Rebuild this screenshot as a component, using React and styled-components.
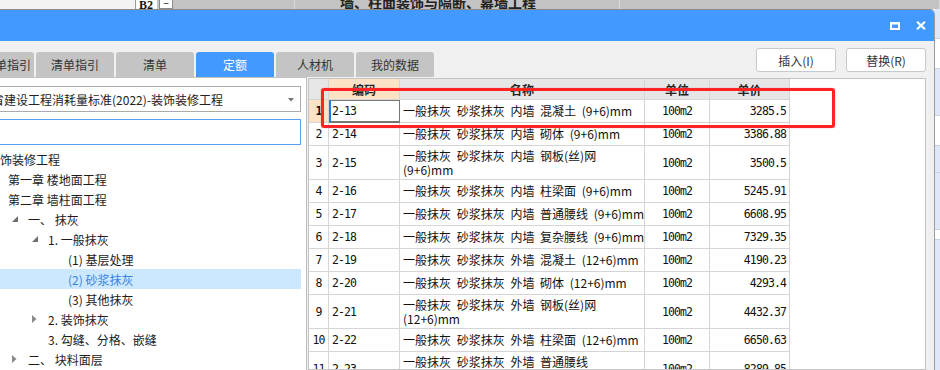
import React from "react";
import styled, { createGlobalStyle } from "styled-components";

const CJK = `"Noto Sans CJK SC", "Noto Sans", sans-serif`;
const MONO = `"DejaVu Sans Mono", "Liberation Mono", "Noto Sans CJK SC", monospace`;
const BLUE = "#4299ff";

const tabs = [
  { label: "清单指引", align: "flex-end" },
  { label: "清单指引" },
  { label: "清单" },
  { label: "定额", active: true },
  { label: "人材机" },
  { label: "我的数据" },
];

const tree = [
  { level: 0, text: "装饰装修工程" },
  { level: 1, text: "第一章 楼地面工程" },
  { level: 1, text: "第二章 墙柱面工程" },
  { level: 2, text: "一、 抹灰", toggle: "open" },
  { level: 3, text: "1. 一般抹灰", toggle: "open" },
  { level: 4, text: "(1) 基层处理" },
  { level: 4, text: "(2) 砂浆抹灰", selected: true },
  { level: 4, text: "(3) 其他抹灰" },
  { level: 3, text: "2. 装饰抹灰", toggle: "closed" },
  { level: 3, text: "3. 勾缝、分格、嵌缝" },
  { level: 2, text: "二、 块料面层", toggle: "closed" },
];

const rows = [
  { code: "2-13", name: "一般抹灰 砂浆抹灰 内墙 混凝土 (9+6)mm", price: "3285.5" },
  { code: "2-14", name: "一般抹灰 砂浆抹灰 内墙 砌体 (9+6)mm", price: "3386.88" },
  { code: "2-15", name: "一般抹灰 砂浆抹灰 内墙 钢板(丝)网\n(9+6)mm", price: "3500.5" },
  { code: "2-16", name: "一般抹灰 砂浆抹灰 内墙 柱梁面 (9+6)mm", price: "5245.91" },
  { code: "2-17", name: "一般抹灰 砂浆抹灰 内墙 普通腰线 (9+6)mm", price: "6608.95" },
  { code: "2-18", name: "一般抹灰 砂浆抹灰 内墙 复杂腰线 (9+6)mm", price: "7329.35" },
  { code: "2-19", name: "一般抹灰 砂浆抹灰 外墙 混凝土 (12+6)mm", price: "4190.23" },
  { code: "2-20", name: "一般抹灰 砂浆抹灰 外墙 砌体 (12+6)mm", price: "4293.4" },
  { code: "2-21", name: "一般抹灰 砂浆抹灰 外墙 钢板(丝)网\n(12+6)mm", price: "4432.37" },
  { code: "2-22", name: "一般抹灰 砂浆抹灰 外墙 柱梁面 (12+6)mm", price: "6650.63" },
  { code: "2-23", name: "一般抹灰 砂浆抹灰 外墙 普通腰线\n(12+6)mm", price: "8289.85" },
];

const sideCells = [
  { h: 30, light: true },
  { h: 30 },
  { h: 47, light: true },
  { h: 30 },
  { h: 27, light: true },
  { h: 57, light: true },
  { h: 10 },
  { h: 140, light: true },
];

const App = () => {
  return (
    <Page>
      <GlobalStyle />
      <BackStrip>
        <BackLight />
        <RefCell>B2</RefCell>
        <MinusCell>−</MinusCell>
        <BackSeg $w={122} />
        <BackSeg $w={325}>
          <BackTitle>墙、柱面装饰与隔断、幕墙工程</BackTitle>
        </BackSeg>
        <BackSeg />
      </BackStrip>
      <Stage>
        <Window>
          <TitleBar>
            <svg width="10" height="8" viewBox="0 0 10 8">
              <path d="M0 0H10V8H0Z M2 2.5V6H8V2.5Z" fill="#fff" fillRule="evenodd" />
            </svg>
            <svg width="10" height="9" viewBox="0 0 10 9">
              <path d="M1 0.8L9 8.2M9 0.8L1 8.2" stroke="#fff" strokeWidth="2.2" />
            </svg>
          </TitleBar>
          <Toolbar>
            <Tabs>
              {tabs.map((t, i) => (
                <Tab key={i} $active={t.active} $align={t.align}>
                  {t.label}
                </Tab>
              ))}
            </Tabs>
            <Buttons>
              <Button>插入(I)</Button>
              <Button>替换(R)</Button>
            </Buttons>
          </Toolbar>
          <Content>
            <LeftPanel>
              <Select>
                省建设工程消耗量标准(2022)-装饰装修工程
                <Caret width="6" height="4" viewBox="0 0 6 4">
                  <path d="M0 0H6L3 3.5Z" fill="#757575" />
                </Caret>
              </Select>
              <Search />
              <Tree>
                {tree.map((n, i) => (
                  <TreeRow key={i} $level={n.level} $selected={n.selected}>
                    <Toggle>
                      {n.toggle === "open" && (
                        <svg width="6" height="6" viewBox="0 0 6 6">
                          <path d="M6 0V6H0Z" fill="#6f6f6f" />
                        </svg>
                      )}
                      {n.toggle === "closed" && (
                        <svg width="5" height="8" viewBox="0 0 5 8">
                          <path d="M0 0L4.5 4L0 8Z" fill="#8a8a8a" />
                        </svg>
                      )}
                    </Toggle>
                    {n.text}
                  </TreeRow>
                ))}
              </Tree>
            </LeftPanel>
            <GridPanel>
              <GridRow $h={21}>
                <HeadCell />
                <HeadCell $hot>编码</HeadCell>
                <HeadCell>名称</HeadCell>
                <HeadCell>单位</HeadCell>
                <HeadCell>单价</HeadCell>
              </GridRow>
              {rows.map((r, i) => (
                <GridRow key={r.code} $h={r.name.includes("\n") ? 34 : 23}>
                  <NumCell $hot={i === 0}>{i + 1}</NumCell>
                  <CodeCell $focus={i === 0}>{r.code}</CodeCell>
                  <NameCell>{r.name}</NameCell>
                  <MonoCell $align="center">100m2</MonoCell>
                  <MonoCell $align="flex-end">{r.price}</MonoCell>
                </GridRow>
              ))}
            </GridPanel>
            <Highlight />
          </Content>
        </Window>
        <OutsideColumn>
          {sideCells.map((c, i) => (
            <SideCell key={i} $h={c.h} $light={c.light} />
          ))}
        </OutsideColumn>
      </Stage>
    </Page>
  );
};

const GlobalStyle = createGlobalStyle`
  html, body {
    margin: 0;
    padding: 0;
    background: #f0f0f0;
  }
  body {
    font-family: ${CJK};
    font-size: 12px;
    color: #222;
  }
  * {
    box-sizing: border-box;
  }
`;

const Page = styled.div`
  width: 940px;
  height: 370px;
  overflow: hidden;
  display: flex;
  flex-direction: column;
`;

const BackStrip = styled.div`
  height: 9px;
  flex: none;
  display: flex;
  background: #c3c3c3;
  overflow: hidden;
`;

const BackLight = styled.div`
  width: 135px;
  background: #f3f3f3;
`;

const RefCell = styled.div`
  width: 22px;
  background: #fff;
  border-left: 1px solid #9a9a9a;
  font-family: "Liberation Serif", serif;
  font-weight: bold;
  font-size: 12px;
  line-height: 9px;
  padding: 1px 0 0 3px;
  color: #111;
`;

const MinusCell = styled.div`
  width: 14px;
  margin-left: 2px;
  background: #fff;
  border: 1px solid #8a8a8a;
  border-top: none;
  font-size: 10px;
  line-height: 6px;
  text-align: center;
  color: #111;
`;

const BackSeg = styled.div`
  width: ${(p) => (p.$w ? `${p.$w}px` : "auto")};
  flex: ${(p) => (p.$w ? "none" : 1)};
  border-right: 1px solid #d9d9d9;
  overflow: hidden;
`;

const BackTitle = styled.div`
  margin: -5px 0 0 45px;
  font-size: 14px;
  line-height: 14px;
  font-weight: bold;
  color: #222;
  white-space: nowrap;
`;

const Stage = styled.div`
  flex: 1;
  min-height: 0;
  display: flex;
  overflow: hidden;
`;

const Window = styled.div`
  flex: none;
  width: 979px;
  margin-left: -44px;
  display: flex;
  flex-direction: column;
  background: #f0f0f0;
  border-top: 1px solid #8c8c8c;
  border-right: 1px solid #9c9c9c;
  border-top-right-radius: 5px;
  overflow: hidden;
`;

const TitleBar = styled.div`
  height: 31px;
  flex: none;
  display: flex;
  align-items: center;
  justify-content: flex-end;
  gap: 16px;
  padding-right: 8px;
  background: ${BLUE};
`;

const Toolbar = styled.div`
  height: 36px;
  flex: none;
  display: flex;
`;

const Tabs = styled.div`
  display: flex;
  gap: 2px;
  align-self: flex-end;
`;

const Tab = styled.div`
  width: 78px;
  height: 25px;
  display: flex;
  align-items: center;
  justify-content: ${(p) => p.$align || "center"};
  padding-right: ${(p) => (p.$align ? "3px" : "0")};
  border-radius: 3px 3px 0 0;
  background: ${(p) => (p.$active ? BLUE : "#c4c4c4")};
  color: ${(p) => (p.$active ? "#fff" : "#333")};
  font-size: 12px;
  white-space: nowrap;
`;

const Buttons = styled.div`
  margin-left: auto;
  display: flex;
  gap: 10px;
  padding: 7px 8px 0 0;
`;

const Button = styled.button`
  width: 80px;
  height: 24px;
  padding: 0;
  background: #fff;
  border: 1px solid #c9c9c9;
  border-radius: 3px;
  font-family: ${CJK};
  font-size: 12px;
  color: #333;
`;

const Content = styled.div`
  flex: 1;
  min-height: 0;
  position: relative;
  display: flex;
  gap: 1px;
  padding-right: 8px;
`;

const LeftPanel = styled.div`
  width: 351px;
  flex: none;
  display: flex;
  flex-direction: column;
  padding: 8px 5px 0 6px;
  background: #fff;
  border-top: 1px solid #c3c3c3;
  border-right: 1px solid #bdbdbd;
`;

const Select = styled.div`
  height: 26px;
  flex: none;
  display: flex;
  align-items: center;
  padding-left: 29px;
  border: 1px solid #ababab;
  white-space: nowrap;
  color: #222;
`;

const Caret = styled.svg`
  margin: 1px 6px 0 auto;
`;

const Search = styled.div`
  height: 26px;
  flex: none;
  margin-top: 7px;
  border: 1px solid #5a9ff0;
`;

const Tree = styled.div`
  margin-top: 4px;
  display: flex;
  flex-direction: column;
`;

const TreeRow = styled.div`
  height: 20px;
  display: flex;
  align-items: center;
  padding-left: ${(p) => 10 + p.$level * 20}px;
  background: ${(p) => (p.$selected ? "#cce8ff" : "transparent")};
  color: ${(p) => (p.$selected ? "#3a83dc" : "#1c1c1c")};
  white-space: nowrap;
`;

const Toggle = styled.span`
  width: 16px;
  flex: none;
  display: flex;
  align-items: center;
`;

const GridPanel = styled.div`
  flex: 1;
  margin-top: 1px;
  background: #fff;
  border: 1px solid #c3c3c3;
  overflow: hidden;
`;

const GridRow = styled.div`
  display: grid;
  grid-template-columns: 20px 71px 245px 65px 80px;
  height: ${(p) => p.$h}px;
`;

const Cell = styled.div`
  display: flex;
  align-items: center;
  justify-content: ${(p) => p.$align || "flex-start"};
  padding: 0 3px;
  border-right: 1px solid #d5d5d5;
  border-bottom: 1px solid #d5d5d5;
  overflow: hidden;
  white-space: pre;
`;

const HeadCell = styled(Cell)`
  justify-content: center;
  background: ${(p) => (p.$hot ? "#fde3c6" : "#e6e6e6")};
  font-weight: bold;
  color: #222;
`;

const MonoCell = styled(Cell)`
  font-family: ${MONO};
  font-size: 11.5px;
  letter-spacing: -0.9px;
  color: #111;
`;

const NumCell = styled(MonoCell)`
  justify-content: center;
  padding: 0;
  background: ${(p) => (p.$hot ? "#fde3c6" : "#fff")};
  font-weight: ${(p) => (p.$hot ? "bold" : "normal")};
`;

const CodeCell = styled(MonoCell)`
  ${(p) =>
    p.$focus &&
    `
    border: 1px solid #777;
    border-left: 2px solid #1c7ee8;
    border-bottom-width: 2px;
    padding-left: 1px;
  `}
`;

const NameCell = styled(Cell)`
  line-height: 14px;
  word-spacing: 3px;
  color: #111;
`;

const Highlight = styled.div`
  position: absolute;
  left: 365px;
  top: 11px;
  width: 514px;
  height: 40px;
  border: 3px solid #ff2424;
  border-radius: 3px;
  box-shadow: 0 0 1px #ff5050;
  pointer-events: none;
`;

const OutsideColumn = styled.div`
  flex: 1;
  display: flex;
  flex-direction: column;
  background: #fff;
`;

const SideCell = styled.div`
  height: ${(p) => p.$h}px;
  flex: none;
  background: ${(p) => (p.$light ? "#dde7f7" : "#fff")};
  border-bottom: 1px solid #c8d2e2;
`;

export default App;
